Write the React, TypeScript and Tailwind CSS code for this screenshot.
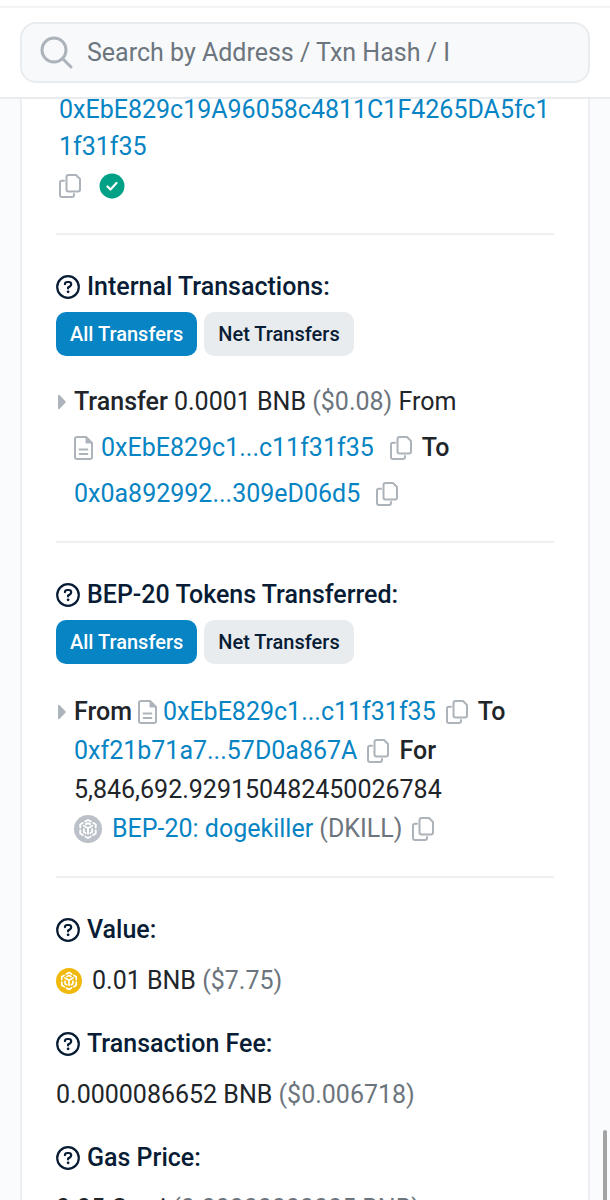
import type { ReactNode } from "react";

function CopyButton({ className = "" }: { className?: string }) {
    return (
        <button type="button" aria-label="Copy" className={`shrink-0 text-[#adb3ba] ${className}`}>
            <svg width="22" height="24" viewBox="0 0 22 24" fill="none" stroke="currentColor" strokeWidth="2" strokeLinejoin="round" strokeLinecap="round">
                <path d="M9.5 1H17l4 4v10.500a2 2 0 0 1-2 2H9.500a2 2 0 0 1-2-2V3a2 2 0 0 1 2-2z" />
                <path d="M5 6.800H3a2 2 0 0 0-2 2V21a2 2 0 0 0 2 2h10a2 2 0 0 0 2-2v-1" />
            </svg>
        </button>
    );
}

function FileIcon() {
    return (
        <svg className="shrink-0 text-[#adb3ba]" width="19" height="24" viewBox="0 0 19 24" fill="none" stroke="currentColor" strokeWidth="2" strokeLinejoin="round" strokeLinecap="round">
            <path d="M3 1h9l6 6v14a2 2 0 0 1-2 2H3a2 2 0 0 1-2-2V3a2 2 0 0 1 2-2z" />
            <path d="M12 1v6h6z" fill="currentColor" strokeWidth="1" />
            <path d="M5.5 13.5h8M5.5 18h8" strokeWidth="1.8" />
        </svg>
    );
}

function HelpIcon() {
    return (
        <svg className="shrink-0" width="24" height="24" viewBox="0 0 24 24" fill="none" stroke="currentColor" strokeWidth="2.2" strokeLinecap="round" strokeLinejoin="round">
            <circle cx="12" cy="12" r="10.8" strokeWidth="2.2" />
            <path d="M8.9 9.2C9 7.8 10 7 11.3 7h1.4c1.5 0 2.5 1 2.5 2.3 0 1-.5 1.700-1.400 2.200l-1.700 1v.9" />
            <circle cx="12.1" cy="16.8" r="1.4" fill="currentColor" stroke="none" />
        </svg>
    );
}

function Caret() {
    return (
        <svg className="shrink-0" width="10" height="16" viewBox="0 0 10 16" fill="#adb3ba">
            <path d="M2 1.500v13c0 .8.8 1 1.400.5l6-6.200c.5-.5.5-1.100 0-1.600L3.400 1C2.800.5 2 .7 2 1.500z" />
        </svg>
    );
}

function CoinIcon({ className }: { className: string }) {
    return (
        <svg className={`shrink-0 ${className}`} viewBox="0 0 26 26" fill="none" stroke="#fff" strokeWidth="1.7" strokeLinejoin="round" strokeLinecap="round">
            <circle cx="13" cy="13" r="13" fill="currentColor" stroke="none" />
            <path d="M10.300 6.100L13 4.600l2.700 1.500M17.900 7.500L20.200 8.800v2.800M20.200 14.200v3l-2.500 1.500M15.500 20L13 21.400 10.500 20M8.300 18.700l-2.500-1.500v-3M5.800 11.600V8.800l2.300-1.300" />
            <path d="M9 10l4 2.300L17 10M13 12.300v5M9.100 13.200v2.500l1.700 1M16.900 13.200v2.500l-1.700 1M11 8.500l2-1.100 2 1.100" />
        </svg>
    );
}

function Heading({ children }: { children: ReactNode }) {
    return (
        <h2 className="flex items-center gap-[7px] text-[25px] leading-9 font-medium text-[#081d35]">
            <HelpIcon />
            {children}
        </h2>
    );
}

function TransferTabs() {
    return (
        <div className="mt-[7px] flex gap-[7px] text-xl leading-6 font-medium">
            <button type="button" className="h-11 rounded-[10px] bg-[#0784c3] px-3.5 text-white">All Transfers</button>
            <button type="button" className="h-11 rounded-[10px] bg-[#e9ecef] px-3.5 text-[#081d35]">Net Transfers</button>
        </div>
    );
}

function Address({ children }: { children: ReactNode }) {
    return <a href="#" className="text-[#0784c3]">{children}</a>;
}

function Divider() {
    return <hr className="mt-6 mb-[34px] border-t-2 border-[#eff0f2]" />;
}

const details = [
    { label: "Value:", amount: "0.01 BNB", note: "($7.75)", coin: true },
    { label: "Transaction Fee:", amount: "0.0000086652 BNB", note: "($0.006718)" },
    { label: "Gas Price:", amount: "0.05 Gwei", note: "(0.00000000005 BNB)" },
];

export default function App() {
    return (
        <div className="relative flex h-screen flex-col overflow-hidden bg-[#fafbfc] font-[Roboto,sans-serif] text-[25px] text-[#212529]">
            <header className="shrink-0 border-b-2 border-[#e9ecef] bg-white">
                <div className="h-2 border-b-2 border-[#f3f4f5]" />
                <div className="px-5 py-3.5">
                    <label className="flex h-[61px] items-center gap-[13px] rounded-2xl border-2 border-[#e9ecef] bg-[#f8f9fb] px-[18px]">
                        <svg className="shrink-0" width="34" height="34" viewBox="0 0 34 34" fill="none" stroke="#adb3ba" strokeWidth="3" strokeLinecap="round">
                            <circle cx="14" cy="14" r="12" />
                            <path d="M22.5 22.5l8.500 8.500" />
                        </svg>
                        <input
                            type="text"
                            aria-label="Search"
                            placeholder="Search by Address / Txn Hash / I"
                            className="min-w-0 flex-1 bg-transparent outline-none placeholder:text-[#6c757d]"
                        />
                    </label>
                </div>
            </header>

            <main className="min-h-0 flex-1 overflow-hidden px-5">
                <div className="border-x-2 border-[#eceef1] bg-white px-[34px] pb-8">
                    <div className="-mt-2 pb-0.5 pl-[3px]">
                        <p className="leading-[37px] break-all">
                            <Address>0xEbE829c19A96058c4811C1F4265DA5fc11f31f35</Address>
                        </p>
                        <div className="flex h-[42px] items-center gap-[18px]">
                            <CopyButton />
                            <svg width="26" height="26" viewBox="0 0 26 26" fill="none">
                                <circle cx="13" cy="13" r="12.5" fill="#00a186" />
                                <path d="M8.5 13.500l3 3 6-6.500" stroke="#fff" strokeWidth="2.2" strokeLinecap="round" strokeLinejoin="round" />
                            </svg>
                        </div>
                    </div>

                    <Divider />

                    <section>
                        <Heading>Internal Transactions:</Heading>
                        <TransferTabs />
                        <div className="mt-[23px] flex gap-2 leading-[46px]">
                            <div className="flex h-[46px] items-center">
                                <Caret />
                            </div>
                            <div>
                                <div className="whitespace-nowrap">
                                    <span className="font-medium">Transfer</span> 0.0001 BNB <span className="text-[#6c757d]">($0.08)</span> From
                                </div>
                                <div className="flex items-center gap-2">
                                    <FileIcon />
                                    <Address>0xEbE829c1...c11f31f35</Address>
                                    <CopyButton className="mr-0.5 ml-2" />
                                    <span className="font-medium">To</span>
                                </div>
                                <div className="flex items-center gap-2">
                                    <Address>0x0a892992...309eD06d5</Address>
                                    <CopyButton className="ml-2" />
                                </div>
                            </div>
                        </div>
                    </section>

                    <Divider />

                    <section className="pb-1">
                        <Heading>BEP-20 Tokens Transferred:</Heading>
                        <TransferTabs />
                        <div className="mt-7 flex gap-2 leading-[39px]">
                            <div className="flex h-[39px] items-center">
                                <Caret />
                            </div>
                            <div>
                                <div className="flex items-center gap-1.5">
                                    <span className="font-medium">From</span>
                                    <FileIcon />
                                    <Address>0xEbE829c1...c11f31f35</Address>
                                    <CopyButton className="mx-1" />
                                    <span className="font-medium">To</span>
                                </div>
                                <div className="flex items-center gap-1.5">
                                    <Address>0xf21b71a7...57D0a867A</Address>
                                    <CopyButton className="mx-1" />
                                    <span className="font-medium">For</span>
                                </div>
                                <div>5,846,692.929150482450026784</div>
                                <div className="flex items-center gap-1.5">
                                    <CoinIcon className="mr-1 h-7 w-7 text-[#bcc1c9]" />
                                    <span>
                                        <Address>BEP-20: dogekiller</Address> <span className="text-[#6c757d]">(DKILL)</span>
                                    </span>
                                    <CopyButton className="ml-1" />
                                </div>
                            </div>
                        </div>
                    </section>

                    <Divider />

                    <dl className="flex flex-col gap-[27px]">
                        {details.map((item) => (
                            <div key={item.label}>
                                <dt>
                                    <Heading>{item.label}</Heading>
                                </dt>
                                <dd className="mt-[15px] flex items-center leading-9">
                                    {item.coin && <CoinIcon className="mr-2.5 h-[26px] w-[26px] text-[#f0b90b]" />}
                                    <span>
                                        {item.amount} <span className="text-[#6c757d]">{item.note}</span>
                                    </span>
                                </dd>
                            </div>
                        ))}
                    </dl>
                </div>
            </main>

            {/* Scroll thumb */}
            <div className="absolute right-[3px] bottom-0 h-[70px] w-1 rounded-t-full bg-[#a3a3a3]" />
        </div>
    );
}
